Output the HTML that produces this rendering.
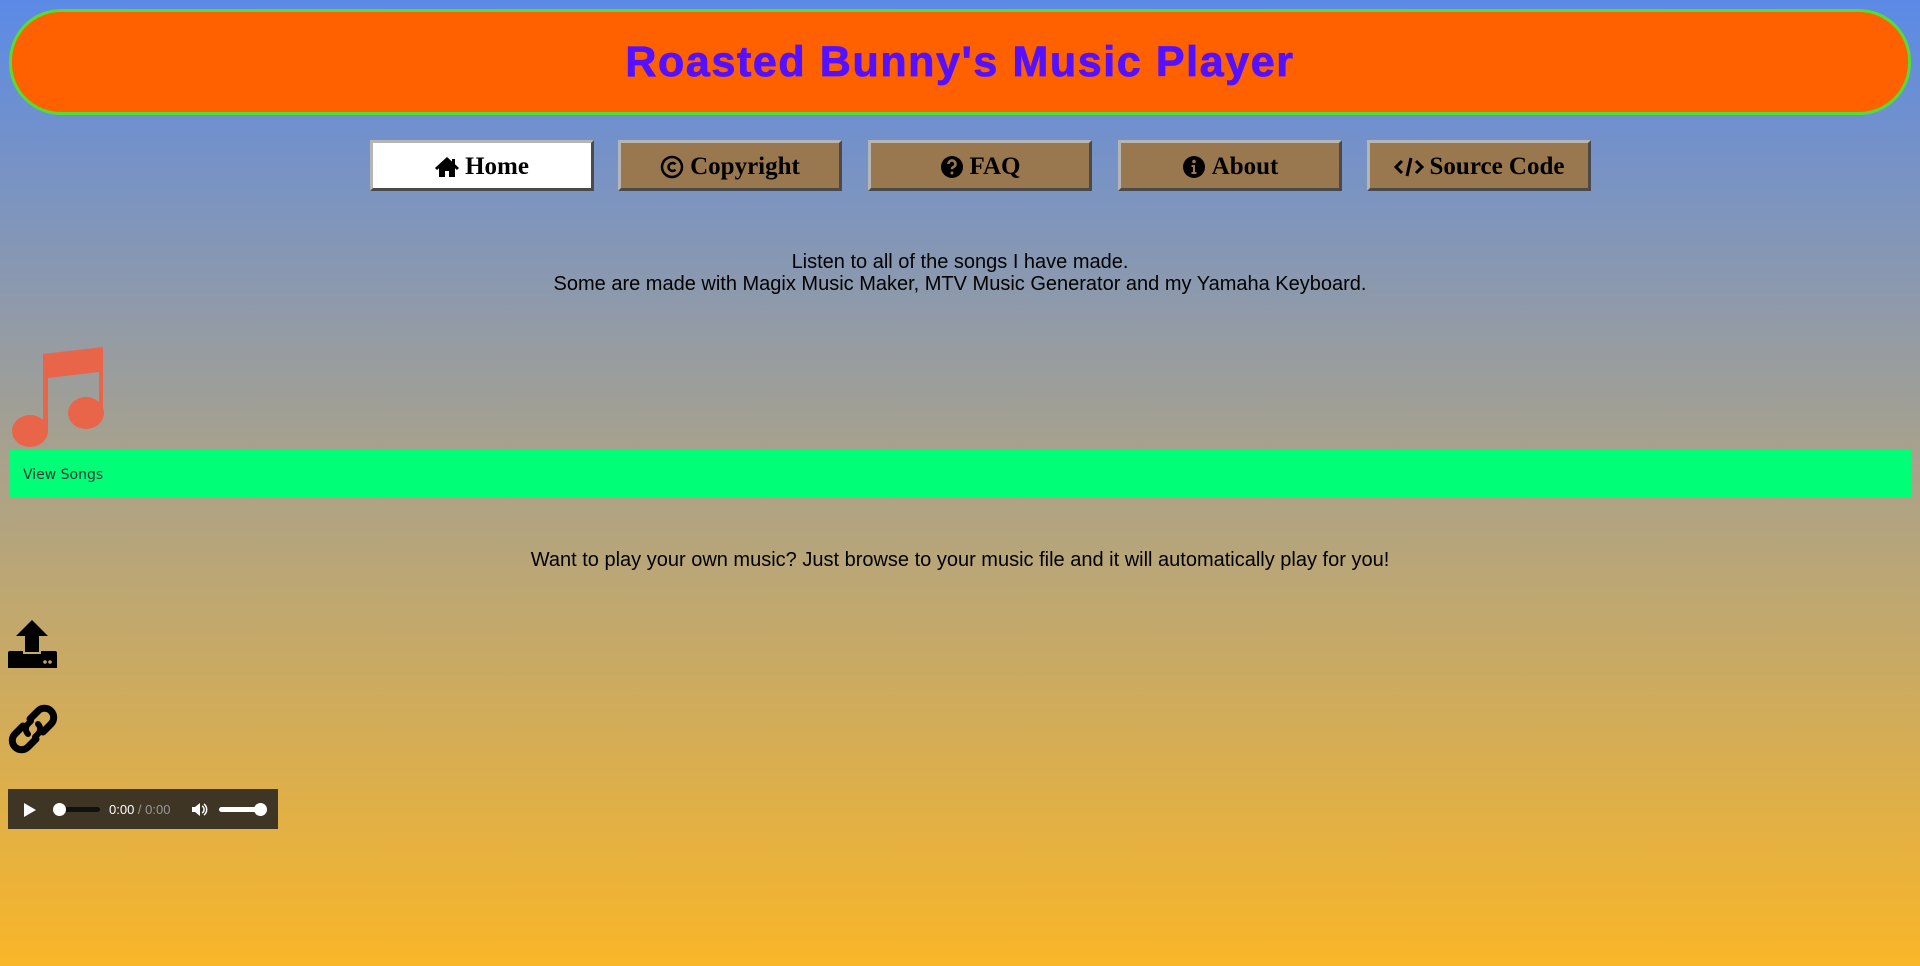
<!DOCTYPE html>
<html><head><meta charset="utf-8"><style>
html,body{margin:0;padding:0}
body{width:1920px;height:966px;overflow:hidden;position:relative;font-family:"Liberation Sans",Arial,sans-serif;
background:linear-gradient(to bottom,#5b8ae6 0%,#a6a18f 46%,#f9b628 100%);}
.hdr{position:absolute;left:9px;top:9px;width:1896px;height:100px;background:#ff6000;border:3px solid #55dd33;border-radius:52px;
text-align:center;line-height:100px;font-weight:bold;font-size:43px;letter-spacing:1.6px;color:#5511ff;-webkit-text-stroke:0.8px #5511ff}
.btn{position:absolute;top:140px;width:218px;height:45px;background:#99774f;border:3px solid;border-color:#b5b5b5 #4a4a4a #4a4a4a #b5b5b5;
font-family:"Liberation Serif",serif;font-weight:bold;font-size:25px;color:#000;display:flex;align-items:center;justify-content:center;gap:6px;padding-top:3px;box-sizing:content-box;height:42px}
.btn svg{width:24px;height:24px}
.home{background:#fff}
.txt{position:absolute;left:0;width:1920px;text-align:center;font-size:20px;line-height:22px;color:#000}
.bar{position:absolute;left:9px;top:450px;width:1902px;height:48px;background:#00ff77;}
.bar span{position:absolute;left:14px;top:17px;font-family:"DejaVu Sans",sans-serif;font-size:14px;color:#333}
.audio{position:absolute;left:8px;top:789px;width:270px;height:40px;background:#3f3524;}
</style></head><body>
<div class="hdr">Roasted Bunny's Music Player</div>

<div class="btn home" style="left:370px"><svg viewBox="0 0 24 24"><path d="M12 2L0 13l2 2 2-1.8V22h6v-6h4v6h6v-8.8l2 1.8 2-2-4-3.7V4h-3v2.6z" fill="#000"/></svg>Home</div>
<div class="btn" style="left:618px"><svg viewBox="0 0 24 24"><circle cx="12" cy="12" r="10" fill="none" stroke="#000" stroke-width="2.5"/><path d="M15.5 9.3A4 4 0 1 0 15.5 14.7" fill="none" stroke="#000" stroke-width="2.5"/></svg>Copyright</div>
<div class="btn" style="left:868px"><svg viewBox="0 0 24 24"><circle cx="12" cy="12" r="11" fill="#000"/><path d="M8.5 9a3.5 3.5 0 1 1 4.5 3.3c-1 .4-1 1-1 2" fill="none" stroke="#99774f" stroke-width="2.6"/><circle cx="12" cy="18" r="1.5" fill="#99774f"/></svg>FAQ</div>
<div class="btn" style="left:1118px"><svg viewBox="0 0 24 24"><circle cx="12" cy="12" r="11" fill="#000"/><circle cx="12" cy="6.5" r="1.8" fill="#99774f"/><path d="M9.5 10h3.5v7h1.5v2h-5v-2h1.5v-5h-1.5z" fill="#99774f"/></svg>About</div>
<div class="btn" style="left:1367px"><svg viewBox="0 0 30 24" style="width:30px"><path d="M8 6L2 12l6 6M22 6l6 6-6 6M17 3l-4 18" fill="none" stroke="#000" stroke-width="3"/></svg>Source Code</div>

<div class="txt" style="top:251px">Listen to all of the songs I have made.<br>Some are made with Magix Music Maker, MTV Music Generator and my Yamaha Keyboard.</div>

<svg style="position:absolute;left:12px;top:346px" width="93" height="102" viewBox="0 0 93 102"><path d="M31 8L91 1V72H87V26L36 32V86H31z" fill="#e8654a"/><ellipse cx="18" cy="85" rx="18" ry="16" fill="#e8654a"/><ellipse cx="74" cy="67" rx="18" ry="16" fill="#e8654a"/></svg>

<div class="bar"><span>View Songs</span></div>

<div class="txt" style="top:549px">Want to play your own music? Just browse to your music file and it will automatically play for you!</div>

<svg style="position:absolute;left:8px;top:620px" width="49" height="50" viewBox="0 0 49 50"><path d="M24 0L8 16h9v16h14V16h9z" fill="#000"/><path d="M2 31h13v3h18v-3h14a2 2 0 0 1 2 2v15H0V33a2 2 0 0 1 2-2z" fill="#000"/><circle cx="37" cy="42" r="1.8" fill="#c4a46a"/><circle cx="42" cy="42" r="1.8" fill="#c4a46a"/></svg>

<svg style="position:absolute;left:8px;top:704px" width="50" height="50" viewBox="0 0 50 50"><path d="M22 15l8-8a9 9 0 0 1 13 13l-8 8" fill="none" stroke="#000" stroke-width="7" stroke-linecap="round"/><path d="M28 35l-8 8a9 9 0 0 1-13-13l8-8" fill="none" stroke="#000" stroke-width="7" stroke-linecap="round"/><path d="M30 20a7 7 0 0 1 0 10l-3 3M20 30a7 7 0 0 1 0-10l3-3" fill="none" stroke="#000" stroke-width="6" stroke-linecap="round"/></svg>

<div class="audio">
<svg style="position:absolute;left:15px;top:13px" width="14" height="16"><path d="M1 1L13 8L1 15z" fill="#fff"/></svg>
<div style="position:absolute;left:46px;top:18px;width:46px;height:5px;background:#111;border-radius:3px"></div>
<div style="position:absolute;left:45px;top:14px;width:13px;height:13px;background:#fff;border-radius:50%"></div>
<div style="position:absolute;left:101px;top:13px;font-family:'Liberation Sans',sans-serif;font-size:13px;color:#fff">0:00 <span style="color:#999">/ 0:00</span></div>
<svg style="position:absolute;left:183px;top:13px" width="18" height="15"><path d="M1 5h3l5-4v13l-5-4H1z" fill="#fff"/><path d="M11 4a4 4 0 0 1 0 7M13 2a7 7 0 0 1 0 11" stroke="#fff" stroke-width="1.5" fill="none"/></svg>
<div style="position:absolute;left:211px;top:18px;width:44px;height:5px;background:#fff;border-radius:3px"></div>
<div style="position:absolute;left:246px;top:14px;width:13px;height:13px;background:#fff;border-radius:50%"></div>
</div>
</body></html>
